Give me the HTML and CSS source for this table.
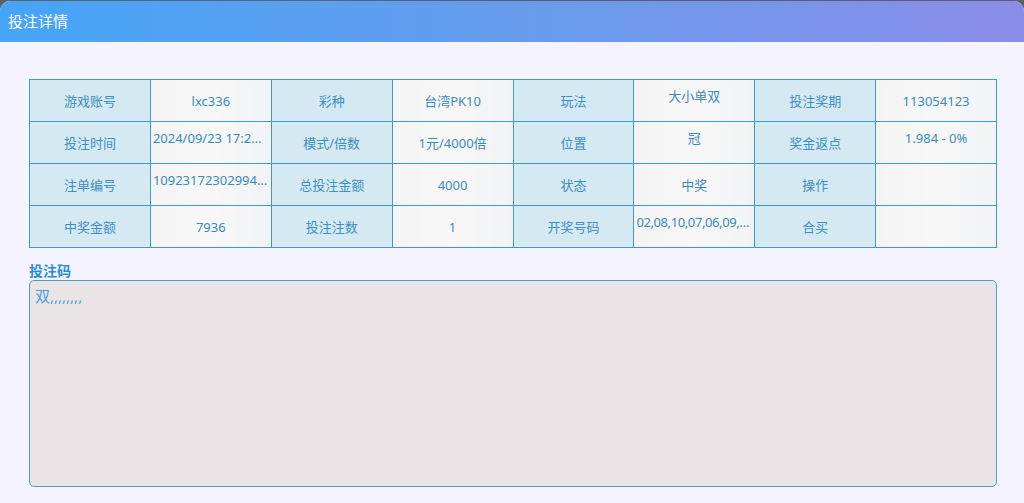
FILE: index.html
```html
<!DOCTYPE html>
<html lang="zh">
<head>
<meta charset="utf-8">
<title>投注详情</title>
<link rel="stylesheet" href="styles.css">
</head>
<body>
<div class="dialog">
  <div class="header">投注详情</div>
  <div class="content">
    <table class="info">
      <tr>
        <td class="lbl">游戏账号</td><td class="val">lxc336</td>
        <td class="lbl">彩种</td><td class="val">台湾PK10</td>
        <td class="lbl">玩法</td><td class="val top"><div class="clip">大小单双</div></td>
        <td class="lbl">投注奖期</td><td class="val">113054123</td>
      </tr>
      <tr>
        <td class="lbl">投注时间</td><td class="val top"><div class="clip">2024/09/23 17:23:02</div></td>
        <td class="lbl">模式/倍数</td><td class="val">1元/4000倍</td>
        <td class="lbl">位置</td><td class="val top"><div class="clip">冠</div></td>
        <td class="lbl">奖金返点</td><td class="val top"><div class="clip">1.984 - 0%</div></td>
      </tr>
      <tr>
        <td class="lbl">注单编号</td><td class="val top"><div class="clip">1092317230299412345</div></td>
        <td class="lbl">总投注金额</td><td class="val">4000</td>
        <td class="lbl">状态</td><td class="val">中奖</td>
        <td class="lbl">操作</td><td class="val"></td>
      </tr>
      <tr>
        <td class="lbl">中奖金额</td><td class="val">7936</td>
        <td class="lbl">投注注数</td><td class="val">1</td>
        <td class="lbl">开奖号码</td><td class="val top"><div class="clip tight">02,08,10,07,06,09,01,03,04,05</div></td>
        <td class="lbl">合买</td><td class="val"></td>
      </tr>
    </table>
    <div class="code-title">投注码</div>
    <div class="code-box">双,,,,,,,,</div>
  </div>
</div>
</body>
</html>
```
FILE: styles.css
```css
html, body {
  margin: 0;
  padding: 0;
  height: 100%;
}
body {
  background: #5c606b;
  font-family: "Microsoft YaHei", "Noto Sans", "Noto Sans CJK SC", sans-serif;
  overflow: hidden;
}
.dialog {
  margin-top: 1px;
  height: 502px;
  background: #f5f3fd;
  border-radius: 10px 10px 0 0;
  overflow: hidden;
  display: flex;
  flex-direction: column;
}
.header {
  height: 41px;
  flex: none;
  background: linear-gradient(90deg, #45a5f8 0%, #6a9bec 55%, #8a8de8 100%);
  color: #ffffff;
  font-size: 15px;
  line-height: 41px;
  padding-left: 8px;
}
.content {
  flex: 1;
  padding: 37px 27px 0 29px;
}
.info {
  border-collapse: collapse;
  width: 968px;
  table-layout: fixed;
}
.info tr {
  height: 42px;
}
.info td {
  border: 1px solid #3d9cc4;
  padding: 0 2px;
  text-align: center;
  vertical-align: middle;
  font-size: 13px;
  line-height: 18px;
  color: #3a8bbd;
  white-space: nowrap;
  overflow: hidden;
}
.info td.lbl {
  background: #d5e9f2;
  color: #3f8fc2;
}
.info td.val {
  background: linear-gradient(90deg, #f4f4f5 0%, #f7f7f7 50%, #f2f3f5 100%);
}
.info td.val.top {
  vertical-align: top;
  padding-top: 7px;
}
.clip {
  overflow: hidden;
  text-overflow: ellipsis;
  white-space: nowrap;
}
.clip.tight {
  letter-spacing: -0.4px;
}
.code-title {
  margin-top: 13px;
  font-size: 14px;
  font-weight: bold;
  color: #2a8ed7;
  line-height: 19px;
}
.code-box {
  box-sizing: border-box;
  height: 207px;
  width: 968px;
  background: #e9e5e7;
  border: 1px solid #4aa0c2;
  border-radius: 5px;
  padding: 5px 5px;
  font-size: 15px;
  color: #4a9fd6;
  line-height: 20px;
}
```
